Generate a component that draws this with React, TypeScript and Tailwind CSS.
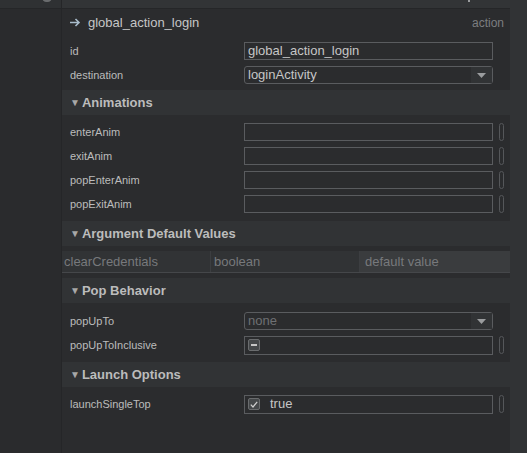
import React from 'react';

function Pill() {
  return <div className="ml-[6px] h-[18px] w-[5px] rounded-full border border-[#55575a]" />;
}

function Header({ title }: { title: string }) {
  return (
    <div className="flex h-[25px] items-center bg-[#313335] pl-[8px] text-[13px] font-bold text-[#bcbcbc]">
      <span className="mr-[2px] text-[10px] text-[#a8a8a8]">▼</span>
      {title}
    </div>
  );
}

function Row({ label, children, pill = false }: { label: string; children: React.ReactNode; pill?: boolean }) {
  return (
    <div className="flex h-[24px] items-center">
      <div className="w-[182px] pl-[8px] text-[11px] text-[#bcbcbc]">{label}</div>
      <div className="w-[249px]">{children}</div>
      {pill ? <Pill /> : null}
    </div>
  );
}

function Input({ value = '', children }: { value?: string; children?: React.ReactNode }) {
  return (
    <div className="flex h-[18px] items-center gap-[6px] border border-[#5a5c5f] bg-[#2b2c2e] px-[3px] text-[13px] text-[#c6c6c6]">
      {children}
      {value}
    </div>
  );
}

function Select({ value, muted = false }: { value: string; muted?: boolean }) {
  return (
    <div className="flex h-[18px] items-center rounded-[3px] border border-[#5a5c5f] bg-[#2b2c2e]">
      <div className={`flex-1 pl-[3px] text-[13px] ${muted ? 'text-[#6e7073]' : 'text-[#c6c6c6]'}`}>{value}</div>
      <div className="flex h-full w-[21px] items-center justify-center bg-[#313335]">
        <svg width="9" height="5" viewBox="0 0 9 5">
          <path d="M0 0h9L4.5 5z" fill="#9a9c9e" />
        </svg>
      </div>
    </div>
  );
}

function Box({ children }: { children: React.ReactNode }) {
  return (
    <div className="flex h-[12px] w-[12px] items-center justify-center rounded-[2px] border border-[#6a6c6e] bg-[#45484a]">
      {children}
    </div>
  );
}

export default function App() {
  return (
    <div className="flex h-[453px] w-[527px] overflow-hidden bg-[#2b2c2e] font-['Liberation_Sans',Arial,sans-serif]">
      <aside className="flex w-[62px] flex-col border-r border-[#252628]">
        <div className="relative h-[9px] border-b border-[#252628] bg-[#2f3133]">
          <div className="absolute left-[42px] top-[-7px] h-[9px] w-[10px] rounded-full bg-[#6a6c6e]" />
        </div>
        <div className="flex-1 bg-[#2a2b2d]" />
      </aside>

      <main className="flex flex-1 flex-col">
        <div className="relative h-[9px] border-b border-[#252628] bg-[#323436]">
          <div className="absolute right-[40px] top-0 h-[2px] w-[2px] bg-[#9a9c9e]" />
        </div>

        <div className="flex h-[27px] items-center justify-between pl-[8px] pr-[6px]">
          <div className="flex items-center text-[13px] text-[#c6c6c6]">
            <svg width="11" height="9" viewBox="0 0 11 9" className="mr-[7px]">
              <path d="M0 4.5h9M5.5 1l3.5 3.5L5.5 8" stroke="#a9bccb" strokeWidth="1.6" fill="none" />
            </svg>
            global_action_login
          </div>
          <div className="text-[12px] text-[#7c7e80]">action</div>
        </div>

        <div className="pb-[3px] pt-[3px]">
          <Row label="id">
            <Input value="global_action_login" />
          </Row>
          <Row label="destination">
            <Select value="loginActivity" />
          </Row>
        </div>

        <Header title="Animations" />
        <div className="pb-[5px] pt-[5px]">
          <Row label="enterAnim" pill>
            <Input />
          </Row>
          <Row label="exitAnim" pill>
            <Input />
          </Row>
          <Row label="popEnterAnim" pill>
            <Input />
          </Row>
          <Row label="popExitAnim" pill>
            <Input />
          </Row>
        </div>

        <Header title="Argument Default Values" />
        <div className="py-[5px]">
          <div className="flex h-[22px] border-b border-[#45474a] bg-[#313335] text-[13px] text-[#77797c]">
            <div className="flex w-[149px] items-center border-r border-[#3c3e41] pl-[2px]">clearCredentials</div>
            <div className="flex w-[149px] items-center border-r border-[#3c3e41] pl-[3px]">boolean</div>
            <div className="flex flex-1 items-center bg-[#3a3c3e] pl-[5px]">default value</div>
          </div>
        </div>

        <Header title="Pop Behavior" />
        <div className="pb-[5px] pt-[6px]">
          <Row label="popUpTo">
            <Select value="none" muted />
          </Row>
          <Row label="popUpToInclusive" pill>
            <div className="flex h-[19px] items-center border border-[#5a5c5f] px-[3px]">
              <Box>
                <div className="h-[2px] w-[6px] bg-[#c6c6c6]" />
              </Box>
            </div>
          </Row>
        </div>

        <Header title="Launch Options" />
        <div className="pt-[5px]">
          <Row label="launchSingleTop" pill>
            <div className="flex h-[19px] items-center gap-[10px] border border-[#5a5c5f] px-[3px] text-[13px] text-[#c6c6c6]">
              <Box>
                <svg width="8" height="7" viewBox="0 0 8 7">
                  <path d="M0.8 3.6l2.2 2.4L7.2 0.8" stroke="#d0d0d0" strokeWidth="1.2" fill="none" />
                </svg>
              </Box>
              true
            </div>
          </Row>
        </div>
      </main>

      <div className="w-[17px] bg-[#313335]" />
    </div>
  );
}
